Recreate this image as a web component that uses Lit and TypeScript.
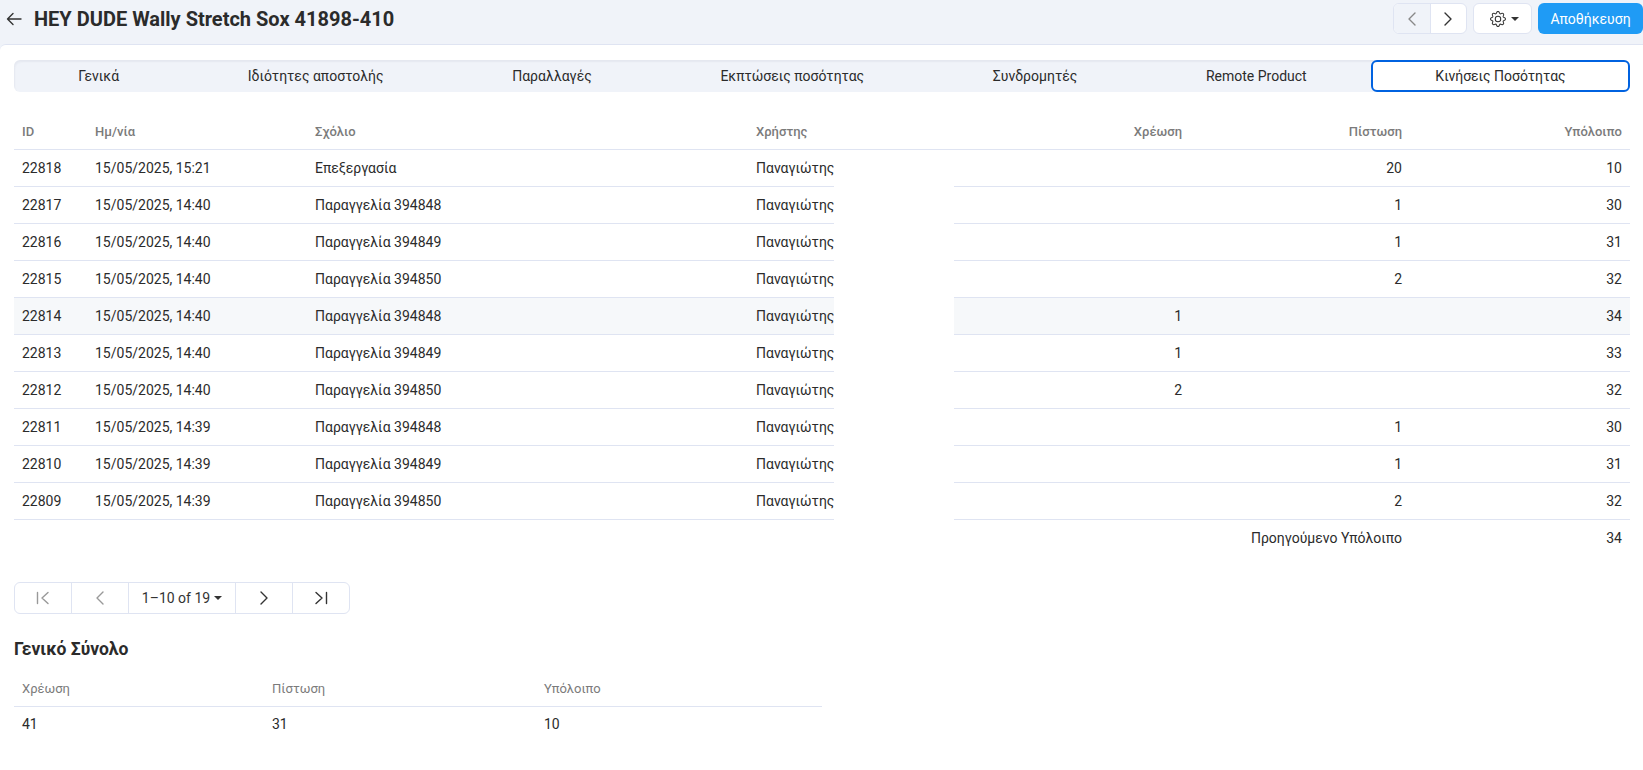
import { LitElement, html, css, svg } from "lit";
import { customElement } from "lit/decorators.js";

const rows = [
  ["22818", "15/05/2025, 15:21", "Επεξεργασία", "", "20", "10"],
  ["22817", "15/05/2025, 14:40", "Παραγγελία 394848", "", "1", "30"],
  ["22816", "15/05/2025, 14:40", "Παραγγελία 394849", "", "1", "31"],
  ["22815", "15/05/2025, 14:40", "Παραγγελία 394850", "", "2", "32"],
  ["22814", "15/05/2025, 14:40", "Παραγγελία 394848", "1", "", "34"],
  ["22813", "15/05/2025, 14:40", "Παραγγελία 394849", "1", "", "33"],
  ["22812", "15/05/2025, 14:40", "Παραγγελία 394850", "2", "", "32"],
  ["22811", "15/05/2025, 14:39", "Παραγγελία 394848", "", "1", "30"],
  ["22810", "15/05/2025, 14:39", "Παραγγελία 394849", "", "1", "31"],
  ["22809", "15/05/2025, 14:39", "Παραγγελία 394850", "", "2", "32"],
];
const tabs = ["Γενικά", "Ιδιότητες αποστολής", "Παραλλαγές", "Εκπτώσεις ποσότητας", "Συνδρομητές", "Remote Product", "Κινήσεις Ποσότητας"];

const icon = (d: unknown, size = 20) => html`<svg width=${size} height=${size} viewBox="0 0 20 20" fill="none" stroke="currentColor" stroke-width="1.4" stroke-linecap="round" stroke-linejoin="round">${d}</svg>`;
const left = svg`<path d="M13 4 L7 10 L13 16"/>`;
const right = svg`<path d="M7 4 L13 10 L7 16"/>`;
const first = svg`<path d="M4.5 4.5 V15.5 M15 4.5 L9 10 L15 15.5"/>`;
const last = svg`<path d="M15.5 4.5 V15.5 M5 4.5 L11 10 L5 15.5"/>`;
const back = svg`<path d="M17 10 H3.5 M9 4.5 L3.5 10 L9 15.5"/>`;
const gear = html`<svg width="16" height="16" viewBox="0 0 16 16" fill="currentColor"><path d="M8 4.754a3.246 3.246 0 1 0 0 6.492 3.246 3.246 0 0 0 0-6.492zM5.754 8a2.246 2.246 0 1 1 4.492 0 2.246 2.246 0 0 1-4.492 0z"/><path d="M9.796 1.343c-.527-1.79-3.065-1.79-3.592 0l-.094.319a.873.873 0 0 1-1.255.52l-.292-.16c-1.64-.892-3.433.902-2.54 2.541l.159.292a.873.873 0 0 1-.52 1.255l-.319.094c-1.79.527-1.79 3.065 0 3.592l.319.094a.873.873 0 0 1 .52 1.255l-.16.292c-.892 1.64.901 3.434 2.541 2.54l.292-.159a.873.873 0 0 1 1.255.52l.094.319c.527 1.79 3.065 1.79 3.592 0l.094-.319a.873.873 0 0 1 1.255-.52l.292.16c1.64.893 3.434-.902 2.54-2.541l-.159-.292a.873.873 0 0 1 .52-1.255l.319-.094c1.79-.527 1.79-3.065 0-3.592l-.319-.094a.873.873 0 0 1-.52-1.255l.16-.292c.893-1.64-.902-3.433-2.541-2.54l-.292.159a.873.873 0 0 1-1.255-.52l-.094-.319zm-2.633.283c.246-.835 1.428-.835 1.674 0l.094.319a1.873 1.873 0 0 0 2.693 1.115l.291-.16c.764-.415 1.6.42 1.184 1.185l-.159.292a1.873 1.873 0 0 0 1.116 2.692l.318.094c.835.246.835 1.428 0 1.674l-.319.094a1.873 1.873 0 0 0-1.115 2.693l.16.291c.415.764-.42 1.6-1.185 1.184l-.291-.159a1.873 1.873 0 0 0-2.693 1.116l-.094.318c-.246.835-1.428.835-1.674 0l-.094-.319a1.873 1.873 0 0 0-2.692-1.115l-.292.16c-.764.415-1.6-.42-1.184-1.185l.159-.291A1.873 1.873 0 0 0 1.945 8.93l-.319-.094c-.835-.246-.835-1.428 0-1.674l.319-.094A1.873 1.873 0 0 0 3.06 4.377l-.16-.292c-.415-.764.42-1.6 1.185-1.184l.292.159a1.873 1.873 0 0 0 2.692-1.115l.094-.319z"/></svg>`;

@customElement("app-root")
export class AppRoot extends LitElement {
  static styles = css`
    :host { display: block; height: 770px; overflow: hidden; background: #f0f3f9; font-family: Roboto, "Noto Sans", sans-serif; font-size: 14px; color: #2b2b2b; }
    .top { height: 44px; display: flex; align-items: center; box-sizing: border-box; padding: 0 0 7px 4px; }
    .back { display: flex; color: #333; margin-right: 10px; }
    h1 { margin: 0; font-size: 20px; font-weight: 700; line-height: 24px; flex: 1; color: #2b2b2b; }
    .actions { display: flex; align-items: center; }
    .group { display: flex; height: 31px; width: 74px; margin-right: 6px; box-sizing: border-box; border: 1px solid #dfe4f2; border-radius: 6px; overflow: hidden; background: #fff; }
    .group span { display: flex; flex: 1; align-items: center; justify-content: center; color: #333; }
    .group span.off { background: #f0f3f9; color: #888; border-right: 1px solid #dfe4f2; }
    .settings { display: flex; align-items: center; justify-content: center; gap: 5px; width: 59px; height: 31px; margin-right: 6px; padding-left: 3px; box-sizing: border-box; border: 1px solid #dfe4f2; border-radius: 6px; background: #fff; color: #333; }
    .caret { width: 0; height: 0; border: 4px solid transparent; border-top-color: currentColor; border-bottom: 0; }
    .save { display: flex; align-items: center; justify-content: center; width: 105px; height: 31px; background: #1f9bf5; color: #fff; border-radius: 6px; }
    main { background: #fff; border-top: 1px solid #dfe4f2; border-top-left-radius: 6px; height: 726px; box-sizing: border-box; padding: 15px 13px 0 14px; }
    .tabs { display: flex; height: 32px; background: #f0f3f9; border-radius: 6px; box-shadow: inset 1px 2px 2px rgba(60, 70, 100, 0.06); }
    .tab { flex: 1 1 auto; display: flex; align-items: center; justify-content: center; white-space: nowrap; box-sizing: border-box; border: 2px solid transparent; }
    .tab.on { background: #fff; border-color: #0062e0; border-radius: 6px; }
    table { border-collapse: separate; border-spacing: 0; table-layout: fixed; width: 100%; }
    .moves { margin-top: 21px; }
    th, td { height: 37px; box-sizing: border-box; padding: 0 8px; text-align: left; white-space: nowrap; overflow: hidden; font-weight: 400; border-bottom: 1px solid #dfe4f2; }
    th { font-size: 13px; font-weight: 500; color: #7b7b7b; padding-top: 1px; }
    .r { text-align: right; }
    td.user { padding-right: 0; }
    td.gap, tfoot td { border-bottom: 0; }
    tfoot td { padding-bottom: 2px; }
    tr.hl td { background: #f6f8fa; }
    tr.hl td.gap { background: #fff; }
    .pager { display: flex; width: 336px; height: 32px; box-sizing: border-box; margin-top: 25px; border: 1px solid #dfe4f2; border-radius: 6px; }
    .pager > span { display: flex; align-items: center; justify-content: center; width: 57px; border-right: 1px solid #dfe4f2; color: #333; box-sizing: border-box; }
    .pager > span.off { color: #999; }
    .pager > span.range { width: 107px; gap: 4px; }
    .pager > span:last-child { border-right: 0; flex: 1; }
    h2 { margin: 24px 0 0; font-size: 17.5px; font-weight: 700; line-height: 22px; }
    .total { width: 808px; margin-top: 10px; }
    .total th { font-weight: 400; padding-top: 0; }
    .total td { border-bottom: 0; padding-bottom: 3px; }
  `;

  render() {
    return html`
      <div class="top">
        <span class="back">${icon(back)}</span>
        <h1>HEY DUDE Wally Stretch Sox 41898-410</h1>
        <div class="actions">
          <div class="group"><span class="off">${icon(left, 20)}</span><span>${icon(right, 20)}</span></div>
          <div class="settings">${gear}<i class="caret"></i></div>
          <div class="save">Αποθήκευση</div>
        </div>
      </div>
      <main>
        <div class="tabs">
          ${tabs.map((t, i) => html`<div class="tab ${i === 6 ? "on" : ""}">${t}</div>`)}
        </div>
        <table class="moves">
          <colgroup><col style="width:73px"><col style="width:220px"><col style="width:441px"><col style="width:86px"><col style="width:120px"><col style="width:236px"><col style="width:220px"><col></colgroup>
          <thead><tr><th>ID</th><th>Ημ/νία</th><th>Σχόλιο</th><th>Χρήστης</th><th></th><th class="r">Χρέωση</th><th class="r">Πίστωση</th><th class="r">Υπόλοιπο</th></tr></thead>
          <tbody>
            ${rows.map((r, i) => html`<tr class=${i === 4 ? "hl" : ""}>
              <td>${r[0]}</td><td>${r[1]}</td><td>${r[2]}</td><td class="user">Παναγιώτης</td><td class="gap"></td>
              <td class="r">${r[3]}</td><td class="r">${r[4]}</td><td class="r">${r[5]}</td></tr>`)}
          </tbody>
          <tfoot><tr><td colspan="5"></td><td class="r" colspan="2">Προηγούμενο Υπόλοιπο</td><td class="r">34</td></tr></tfoot>
        </table>
        <div class="pager">
          <span class="off">${icon(first)}</span>
          <span class="off">${icon(left)}</span>
          <span class="range">1–10 of 19 <i class="caret"></i></span>
          <span>${icon(right)}</span>
          <span>${icon(last)}</span>
        </div>
        <h2>Γενικό Σύνολο</h2>
        <table class="total">
          <colgroup><col style="width:250px"><col style="width:272px"><col></colgroup>
          <thead><tr><th>Χρέωση</th><th>Πίστωση</th><th>Υπόλοιπο</th></tr></thead>
          <tbody><tr><td>41</td><td>31</td><td>10</td></tr></tbody>
        </table>
      </main>
    `;
  }
}
